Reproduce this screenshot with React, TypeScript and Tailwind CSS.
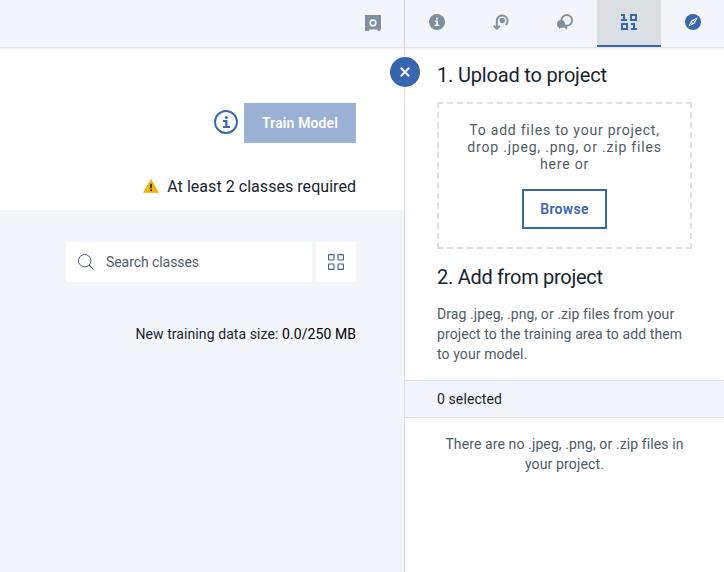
import React from "react";

function VaultIcon() {
  return (
    <svg width="16" height="16" viewBox="0 0 16 16" className="block">
      <path fill="#7f8f9c" d="M0 0H16V14L14.5 16H12.5V14.6H4.2V16H0Z" />
      <circle cx="8" cy="8" r="2.8" fill="none" stroke="#f2f5fa" strokeWidth="1.7" />
    </svg>
  );
}

function InfoSolidIcon() {
  return (
    <svg width="16" height="16" viewBox="0 0 16 16" className="block">
      <circle cx="8" cy="8" r="8" fill="#7f8f9c" />
      <path fill="#f2f5fa" d="M7 3.8H9V5.5H7ZM5.8 6.5H9V10.8H10.3V12H5.7V10.8H7.2V7.7H5.8Z" />
    </svg>
  );
}

function LoopIcon() {
  return (
    <svg width="16" height="16" viewBox="0 0 16 16" className="block">
      <path
        d="M3.8 13V6.9A5.4 5.4 0 1 1 12.7 11"
        fill="none"
        stroke="#7f8f9c"
        strokeWidth="1.9"
      />
      <path d="M0.8 11.7L3.8 14.6L6.8 11.7" fill="none" stroke="#7f8f9c" strokeWidth="2" />
      <circle cx="9.3" cy="6.5" r="2.7" fill="#7f8f9c" />
    </svg>
  );
}

function BadgesIcon() {
  return (
    <svg width="16" height="16" viewBox="0 0 16 16" className="block">
      <circle cx="9.7" cy="6.3" r="5.3" fill="none" stroke="#7f8f9c" strokeWidth="1.9" />
      <circle cx="4" cy="10" r="4" fill="#7f8f9c" />
      <path d="M1.8 12.5H4.4L2.4 15.8ZM4.6 12.8L8.2 11.4L10.6 12.2L9.8 15.8L7.4 13.4Z" fill="#7f8f9c" />
    </svg>
  );
}

function BinaryIcon() {
  return (
    <svg width="16" height="16" viewBox="0 0 16 16" className="block">
      <path
        fill="#3467b0"
        fillRule="evenodd"
        d="M0 0H4V5H6V7H0V5H2V2H0ZM9 0H16V7H9ZM11 2V5H14V2ZM0 9H7V16H0ZM2 11V14H5V11ZM10 9H14V14H16V16H10V14H12V11H10Z"
      />
    </svg>
  );
}

function CompassIcon() {
  return (
    <svg width="16" height="16" viewBox="0 0 16 16" className="block">
      <circle cx="8" cy="8" r="8" fill="#3467b0" />
      <path
        fill="#f2f5fa"
        fillRule="evenodd"
        d="M12.8 3.2L9.8 9.6L3.2 12.8L6.2 6.4ZM8 7A1 1 0 1 0 8 9A1 1 0 1 0 8 7Z"
      />
      <path d="M5 11L7.2 8.8M8.8 7.2L11 5" stroke="#3467b0" strokeWidth="0.6" />
    </svg>
  );
}

function InfoOutlineIcon() {
  return (
    <svg width="24" height="24" viewBox="0 0 24 24" className="block">
      <circle cx="12" cy="12" r="11" fill="none" stroke="#3467b0" strokeWidth="1.9" />
      <circle cx="12.3" cy="7.5" r="1.5" fill="#3467b0" />
      <path fill="#3467b0" d="M9 10H13.5V16H16V18H9V16H11.3V12H9Z" />
    </svg>
  );
}

function WarningIcon() {
  return (
    <svg width="16" height="14" viewBox="0 0 16 14" className="block">
      <path d="M8 0.6L15.5 13.6H0.5Z" fill="#f0b40a" stroke="#f0b40a" strokeWidth="0.8" strokeLinejoin="round" />
      <path d="M7.2 4.7H8.8V9.2H7.2Z" fill="#15242f" />
      <circle cx="8" cy="11.3" r="1" fill="#15242f" />
    </svg>
  );
}

function SearchIcon() {
  return (
    <svg width="16" height="16" viewBox="0 0 16 16" className="block">
      <circle cx="6.7" cy="6.7" r="6.2" fill="none" stroke="#4d5b66" strokeWidth="1" />
      <path d="M11 11L15.6 15.6" stroke="#4d5b66" strokeWidth="1.1" />
    </svg>
  );
}

function GridIcon() {
  return (
    <svg width="16" height="16" viewBox="0 0 16 16" className="block">
      <g fill="none" stroke="#3c5d93" strokeWidth="1.1">
        <rect x="0.6" y="0.6" width="5.4" height="5.4" rx="0.4" />
        <rect x="10" y="0.6" width="5.4" height="5.4" rx="0.4" />
        <rect x="0.6" y="10" width="5.4" height="5.4" rx="0.4" />
        <rect x="10" y="10" width="5.4" height="5.4" rx="0.4" />
      </g>
    </svg>
  );
}

function TrainingArea() {
  return (
    <main className="flex w-[404px] shrink-0 flex-col bg-[#f2f5fa]">
      <header className="flex h-12 shrink-0 justify-end border-b border-[#e2e7ea] pr-[23px] pt-[15px]">
        <VaultIcon />
      </header>
      <section className="flex h-[162px] shrink-0 flex-col items-end bg-white pr-12 pt-[55px] shadow-[inset_0_2px_2px_-1px_rgba(0,0,0,0.06)]">
        <div className="flex gap-[6px]">
          <div className="pt-[7px]">
            <InfoOutlineIcon />
          </div>
          <button className="h-10 w-28 whitespace-nowrap bg-[#9ab1d5] text-sm font-semibold tracking-[0.14px] text-white">
            Train Model
          </button>
        </div>
        <div className="mt-[31px] flex items-center gap-2 text-base leading-6 text-[#15242f]">
          <WarningIcon />
          <span className="relative top-px whitespace-nowrap tracking-[0.045px]">At least 2 classes required</span>
        </div>
      </section>
      <section className="flex flex-1 flex-col items-end pr-12 pt-8">
        <div className="flex gap-1">
          <div className="flex h-10 w-[246px] items-center gap-3 bg-white px-3 text-sm text-[#4d5b66]">
            <SearchIcon />
            <span className="whitespace-nowrap tracking-[-0.07px]">Search classes</span>
          </div>
          <button className="grid h-10 w-10 place-items-center bg-white pb-px">
            <GridIcon />
          </button>
        </div>
        <p className="mt-[42px] whitespace-nowrap text-sm leading-5 tracking-[0.08px] text-[#15242f]">
          New training data size: <span className="text-black">0.0/250 MB</span>
        </p>
      </section>
    </main>
  );
}

function DataPanel() {
  return (
    <aside className="relative flex min-w-0 flex-1 flex-col border-l border-[#dadfe1] bg-white">
      <nav className="flex h-12 shrink-0 overflow-hidden border-b border-[#e2e7ea] bg-[#f2f5fa] shadow-[0_1px_3px_rgba(0,0,0,0.07)]">
        <div className="flex w-16 shrink-0 justify-center pt-[14px]"><InfoSolidIcon /></div>
        <div className="flex w-16 shrink-0 justify-center pt-[14px]"><LoopIcon /></div>
        <div className="flex w-16 shrink-0 justify-center pt-[14px]"><BadgesIcon /></div>
        <div className="flex w-16 shrink-0 justify-center border-b-2 border-[#3467b0] bg-[#dadfe1] pt-[14px]"><BinaryIcon /></div>
        <div className="flex w-16 shrink-0 justify-center pt-[14px]"><CompassIcon /></div>
      </nav>
      <button className="absolute -left-[15px] top-[57px] grid h-[30px] w-[30px] place-items-center rounded-full bg-[#3467b0]">
        <svg width="10" height="10" viewBox="0 0 10 10">
          <path d="M0.8 0.8L9.2 9.2M9.2 0.8L0.8 9.2" stroke="white" strokeWidth="2" />
        </svg>
      </button>
      <section className="px-8 pt-[13px]">
        <h2 className="whitespace-nowrap text-xl leading-7 tracking-[-0.18px] text-[#15242f]">1. Upload to project</h2>
        <div className="mt-[13px] flex h-[147px] w-[255px] flex-col items-center border-2 border-dashed border-[#dadfe1] pt-[18px]">
          <p className="flex flex-col items-center whitespace-nowrap text-sm leading-[17px] text-[#4d5b66]">
            <span className="tracking-[0.77px]">To add files to your project,</span>
            <span className="tracking-[0.8px]">drop .jpeg, .png, or .zip files</span>
            <span className="tracking-[0.8px]">here or</span>
          </p>
          <button className="mt-[16px] h-10 w-[85px] border-2 border-[#3467b0] text-sm font-semibold tracking-[0.3px] text-[#3467b0]">
            Browse
          </button>
        </div>
        <h2 className="mt-[14px] whitespace-nowrap text-xl leading-7 tracking-[-0.28px] text-[#15242f]">2. Add from project</h2>
        <p className="mt-[13px] flex flex-col items-start whitespace-nowrap text-sm leading-5 text-[#4d5b66]">
          <span className="tracking-[0.08px]">Drag .jpeg, .png, or .zip files from your</span>
          <span className="tracking-[0.09px]">project to the training area to add them</span>
          <span className="tracking-[0.1px]">to your model.</span>
        </p>
      </section>
      <div className="mt-4 flex h-[38px] shrink-0 items-center border-y border-[#dadfe1] bg-[#f2f5fa] px-8 text-sm text-[#15242f]">
        <span className="tracking-[0.1px]">0 selected</span>
      </div>
      <p className="mt-4 flex flex-col items-center whitespace-nowrap text-sm leading-5 text-[#4d5b66]">
        <span className="tracking-[0.11px]">There are no .jpeg, .png, or .zip files in</span>
        <span className="tracking-[0.14px]">your project.</span>
      </p>
    </aside>
  );
}

export default function App() {
  return (
    <div className="flex h-[572px] w-[724px] overflow-hidden font-['Roboto',sans-serif]">
      <TrainingArea />
      <DataPanel />
    </div>
  );
}
